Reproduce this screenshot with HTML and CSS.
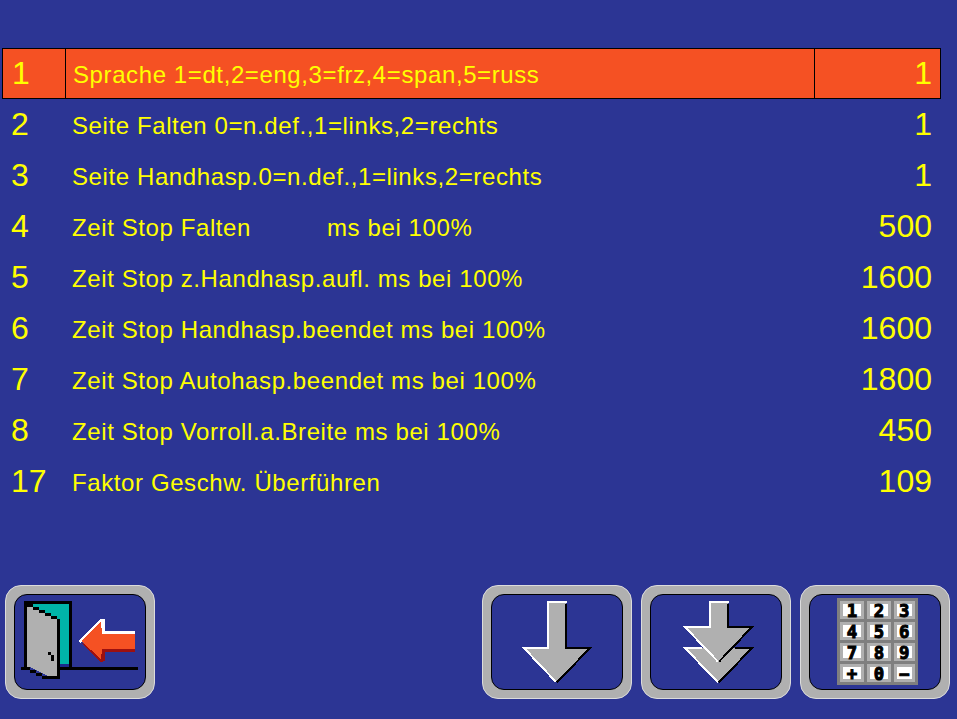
FILE: index.html
```html
<!DOCTYPE html>
<html lang="de">
<head>
<meta charset="utf-8">
<title>Parameter</title>
<link rel="stylesheet" href="styles.css">
</head>
<body>
<main class="screen">
  <section class="table">
    <div class="row selected"><span class="num">1</span><span class="label">Sprache 1=dt,2=eng,3=frz,4=span,5=russ</span><span class="val">1</span></div>
    <div class="row"><span class="num">2</span><span class="label">Seite Falten 0=n.def.,1=links,2=rechts</span><span class="val">1</span></div>
    <div class="row"><span class="num">3</span><span class="label">Seite Handhasp.0=n.def.,1=links,2=rechts</span><span class="val">1</span></div>
    <div class="row"><span class="num">4</span><span class="label">Zeit Stop Falten<span class="gap"></span>ms bei 100%</span><span class="val">500</span></div>
    <div class="row"><span class="num">5</span><span class="label">Zeit Stop z.Handhasp.aufl. ms bei 100%</span><span class="val">1600</span></div>
    <div class="row"><span class="num">6</span><span class="label">Zeit Stop Handhasp.beendet ms bei 100%</span><span class="val">1600</span></div>
    <div class="row"><span class="num">7</span><span class="label">Zeit Stop Autohasp.beendet ms bei 100%</span><span class="val">1800</span></div>
    <div class="row"><span class="num">8</span><span class="label">Zeit Stop Vorroll.a.Breite ms bei 100%</span><span class="val">450</span></div>
    <div class="row"><span class="num">17</span><span class="label">Faktor Geschw. Überführen</span><span class="val">109</span></div>
  </section>
  <nav class="buttons">
    <button class="btn" type="button" aria-label="Zurück">
      <span class="inner">
        <svg class="icon" viewBox="42 57 396 288">
          <polygon fill="#00b4a8" points="99,87 207,87 207,267 171,267 171,132 99,96"/>
          <rect x="180" y="267" width="27" height="9" fill="#1b2a8c"/>
          <polygon fill="#b0b0b0" points="81,96 99,96 117,105 135,114 153,123 171,132 171,303 144,303 126,294 108,285 90,276 81,276"/>
          <g fill="#000">
            <rect x="72" y="78" width="144" height="9"/>
            <rect x="207" y="78" width="9" height="207"/>
            <rect x="63" y="276" width="27" height="9"/>
            <rect x="171" y="276" width="243" height="9"/>
            <rect x="72" y="78" width="9" height="207"/>
            <rect x="171" y="132" width="9" height="180"/>
            <rect x="81" y="87" width="18" height="9"/>
            <rect x="99" y="96" width="18" height="9"/>
            <rect x="117" y="105" width="18" height="9"/>
            <rect x="135" y="114" width="18" height="9"/>
            <rect x="153" y="123" width="18" height="9"/>
            <rect x="90" y="285" width="18" height="9"/>
            <rect x="108" y="294" width="18" height="9"/>
            <rect x="126" y="303" width="54" height="9"/>
            <rect x="144" y="231" width="9" height="9"/>
            <rect x="153" y="240" width="9" height="18"/>
          </g>
          <polygon fill="#9c1010" points="243,204 300,261 315,258 315,231 405,231 405,220 300,220"/>
          <polygon fill="#fff" points="234,198 300,132 315,132 315,168 405,168 405,180 280,180 240,204"/>
          <polygon fill="#f55123" points="243,198 303,141 306,177 405,177 405,222 306,222 303,252"/>
        </svg>
      </span>
    </button>
    <div class="spacer"></div>
    <button class="btn" type="button" aria-label="Weiter">
      <span class="inner">
        <svg class="icon" viewBox="48 57 396 288">
          <polygon fill="#b0b0b0" points="219,84 273,84 273,219 345,219 243,321 147,219 219,219"/>
          <polyline class="hi" points="243,321 147,219 219,219 219,81"/>
          <polyline class="hi" points="216,81 276,81"/>
          <polyline class="lo" points="246,322 345,219 273,219 273,87"/>
        </svg>
      </span>
    </button>
    <button class="btn" type="button" aria-label="Schnell weiter">
      <span class="inner">
        <svg class="icon" viewBox="45 57 396 288">
          <polygon fill="#b0b0b0" points="150,219 351,219 249,322"/>
          <polyline class="hi" points="249,322 150,219 200,219"/>
          <polyline class="lo" points="252,322 351,219 300,219"/>
          <polygon fill="#b0b0b0" points="225,84 279,84 279,156 351,156 249,260 150,156 225,156"/>
          <polyline class="hi" points="249,260 150,156 225,156 225,81"/>
          <polyline class="hi" points="222,81 282,81"/>
          <polyline class="lo" points="252,260 351,156 279,156 279,87"/>
        </svg>
      </span>
    </button>
    <button class="btn" type="button" aria-label="Zifferntastatur">
      <span class="inner">
        <svg class="icon" viewBox="42 57 396 288">
          <rect x="126" y="69" width="243" height="261" fill="#7f7f7f"/>
          <g class="keys">
            <rect x="139.5" y="82.5" width="63" height="45"/><rect x="220.5" y="82.5" width="63" height="45"/><rect x="301.5" y="82.5" width="54" height="45"/>
            <rect x="139.5" y="145.5" width="63" height="45"/><rect x="220.5" y="145.5" width="63" height="45"/><rect x="301.5" y="145.5" width="54" height="45"/>
            <rect x="139.5" y="208.5" width="63" height="45"/><rect x="220.5" y="208.5" width="63" height="45"/><rect x="301.5" y="208.5" width="54" height="45"/>
            <rect x="139.5" y="271.5" width="63" height="45"/><rect x="220.5" y="271.5" width="63" height="45"/><rect x="301.5" y="271.5" width="54" height="45"/>
          </g>
          <g class="keytext">
            <text x="171" y="127">1</text><text x="252" y="127">2</text><text x="328" y="127">3</text>
            <text x="171" y="190">4</text><text x="252" y="190">5</text><text x="328" y="190">6</text>
            <text x="171" y="253">7</text><text x="252" y="253">8</text><text x="328" y="253">9</text>
            <text x="171" y="316">+</text><text x="252" y="316">0</text><text x="328" y="316">−</text>
          </g>
        </svg>
      </span>
    </button>
  </nav>
</main>
</body>
</html>
```
FILE: styles.css
```css
html, body {
  margin: 0;
  padding: 0;
  height: 100%;
  background: #2c3594;
  overflow: hidden;
}
.screen {
  width: 957px;
  height: 719px;
  padding-top: 48px;
  box-sizing: border-box;
  font-family: "Liberation Sans", Arial, sans-serif;
  color: #ffff00;
}
.table {
  margin-left: 2px;
  width: 939px;
}
.row {
  display: grid;
  grid-template-columns: 62px 750px 1fr;
  height: 51px;
  box-sizing: border-box;
  border: 1px solid transparent;
  align-items: center;
}
.row > span {
  display: flex;
  align-items: center;
  height: 100%;
  white-space: pre;
  box-sizing: border-box;
}
.selected {
  background: #f55123;
  border-color: #000;
}
.num {
  font-size: 32px;
  padding-left: 8px;
}
.selected .num {
  padding-left: 9px;
}
.row > .label {
  font-size: 24px;
  letter-spacing: 0.6px;
  padding-left: 7px;
  padding-top: 2px;
}
.gap {
  display: inline-block;
  width: 76px;
}
.selected .label {
  border-left: 1px solid #000;
  border-right: 1px solid #000;
}
.val {
  font-size: 32px;
  justify-content: flex-end;
  padding-right: 8px;
}
.buttons {
  display: flex;
  gap: 9px;
  margin-top: 78px;
  padding: 0 7px 0 5px;
}
.spacer {
  flex: 1;
}
.btn {
  width: 150px;
  height: 114px;
  padding: 8px;
  box-sizing: border-box;
  background: #b0b0b0;
  border: 1px solid #dcdcdc;
  border-radius: 16px;
  display: flex;
}
.inner {
  flex: 1;
  display: block;
  background: #2c3594;
  border: 1px solid #000;
  border-radius: 13px;
}
.icon {
  display: block;
  width: 132px;
  height: 96px;
  margin: -1px;
  shape-rendering: crispEdges;
}
.hi, .lo {
  fill: none;
  stroke-width: 6;
}
.hi { stroke: #fff; }
.lo { stroke: #000; }
.keys rect {
  fill: #fff;
  stroke: #b0b0b0;
  stroke-width: 9;
}
.keytext text {
  font-family: "DejaVu Sans Mono", monospace;
  font-weight: bold;
  font-size: 52px;
  text-anchor: middle;
  fill: #000;
  stroke: #000;
  stroke-width: 3px;
}
```
